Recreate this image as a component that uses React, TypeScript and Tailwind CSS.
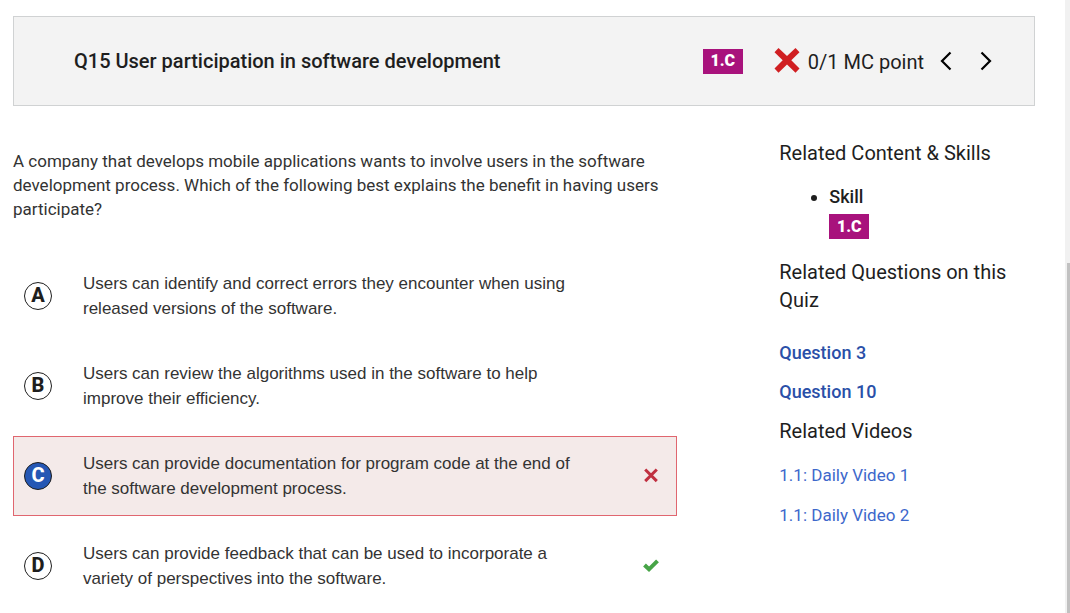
type Mark = "wrong" | "right" | undefined;

const choices: { letter: string; text: string; chosen?: boolean; mark?: Mark }[] = [
  { letter: "A", text: "Users can identify and correct errors they encounter when using released versions of the software." },
  { letter: "B", text: "Users can review the algorithms used in the software to help improve their efficiency." },
  {
    letter: "C",
    text: "Users can provide documentation for program code at the end of the software development process.",
    chosen: true,
    mark: "wrong",
  },
  {
    letter: "D",
    text: "Users can provide feedback that can be used to incorporate a variety of perspectives into the software.",
    mark: "right",
  },
];

function SkillBadge() {
  return (
    <span className="flex h-[25px] w-10 items-center justify-center bg-[#a8127c] text-base leading-6 font-black text-white">
      1.C
    </span>
  );
}

function CrossIcon({ className }: { className: string }) {
  return (
    <svg viewBox="0 0 26 26" className={className} fill="currentColor" aria-hidden="true">
      <path d="M4.5 0 13 8 21.5 0 25.5 4.2 17.3 12.2 25.5 20.5 21.5 24.7 13 16.5 4.5 24.7 .5 20.5 8.7 12.2 .5 4.2Z" />
    </svg>
  );
}

function Chevron({ points }: { points: string }) {
  return (
    <svg viewBox="0 0 12 20" className="h-5 w-3" fill="none" stroke="currentColor" strokeWidth="2.2" aria-hidden="true">
      <polyline points={points} />
    </svg>
  );
}

function ResultMark({ mark }: { mark: Mark }) {
  if (mark === "wrong") {
    return (
      <svg viewBox="0 0 16 16" className="size-4" role="img" aria-label="Incorrect">
        <path d="M2.2 1.5 13.8 13.1M13.8 1.5 2.2 13.1" fill="none" stroke="#c03040" strokeWidth="3" />
      </svg>
    );
  }
  if (mark === "right") {
    return (
      <svg viewBox="0 0 16 16" className="size-4" role="img" aria-label="Correct">
        <path d="M1.5 7 6 11.3 14.5 2.8" fill="none" stroke="#47a447" strokeWidth="4" />
      </svg>
    );
  }
  return null;
}

function SideHeading({ children }: { children: string }) {
  return <h2 className="text-xl leading-7 font-normal">{children}</h2>;
}

export default function App() {
  return (
    <div className="flex min-h-screen bg-white font-[Roboto,sans-serif] text-[#1e1e1e]">
      <main className="min-w-0 flex-1 pt-4 pr-[30px] pl-[13px]">
        <header className="flex h-[90px] items-center border border-[#d0d2d3] bg-[#f3f3f3] pr-[42px] pl-[60px]">
          <h1 className="flex-1 text-xl leading-7 font-medium">Q15 User participation in software development</h1>
          <SkillBadge />
          <div className="ml-[31px] flex items-center gap-2">
            <CrossIcon className="size-[26px] text-[#d01f22]" />
            <span className="pt-[2px] text-xl leading-7">0/1 MC point</span>
          </div>
          <nav className="ml-4 flex items-center gap-7 text-black">
            <button type="button" aria-label="Previous question" className="flex">
              <Chevron points="10.5,1.5 2,10 10.5,18.5" />
            </button>
            <button type="button" aria-label="Next question" className="flex">
              <Chevron points="1.5,1.5 10,10 1.5,18.5" />
            </button>
          </nav>
        </header>

        <div className="grid grid-cols-[65%_1fr] gap-x-[102px]">
          <section className="pt-[43px]">
            <p className="text-[17px] leading-6 text-[#333]">
              A company that develops mobile applications wants to involve users in the software development process.
              Which of the following best explains the benefit in having users participate?
            </p>
            <ol className="mt-[35px] flex flex-col gap-[10px]">
              {choices.map((choice) => (
                <li
                  key={choice.letter}
                  className={
                    "flex h-20 items-center border pr-[17px] pl-[10px] " +
                    (choice.chosen ? "border-[#e0666f] bg-[#f4eae9]" : "border-transparent")
                  }
                >
                  <span
                    className={
                      "flex size-7 shrink-0 items-center justify-center rounded-full border pb-[2px] text-xl leading-6 font-extrabold " +
                      (choice.chosen ? "border-[#1e1e1e] bg-[#2557b4] text-white" : "border-[#1e1e1e]")
                    }
                  >
                    {choice.letter}
                  </span>
                  <p className="mr-14 ml-[31px] flex-1 font-['Liberation_Sans',Arial,sans-serif] text-[17px] leading-[25px] text-[#333]">
                    {choice.text}
                  </p>
                  <span className="flex w-4 shrink-0">
                    <ResultMark mark={choice.mark} />
                  </span>
                </li>
              ))}
            </ol>
          </section>

          <aside className="pt-[33px]">
            <SideHeading>Related Content &amp; Skills</SideHeading>
            <ul className="mt-[17px] mb-[19px] list-disc pl-[50px]">
              <li className="text-lg leading-[25px] font-medium">
                Skill
                <div className="mt-[5px]">
                  <SkillBadge />
                </div>
              </li>
            </ul>
            <SideHeading>Related Questions on this Quiz</SideHeading>
            <div className="mt-[26px] flex flex-col items-start gap-[14px] text-lg leading-[25px] font-medium text-[#2a4fa8]">
              <a href="#question-3">Question 3</a>
              <a href="#question-10">Question 10</a>
            </div>
            <div className="mt-[13px]">
              <SideHeading>Related Videos</SideHeading>
            </div>
            <div className="mt-[18px] flex flex-col items-start gap-[15px] text-[17px] leading-[25px] text-[#3d68cb]">
              <a href="#video-1">1.1: Daily Video 1</a>
              <a href="#video-2">1.1: Daily Video 2</a>
            </div>
          </aside>
        </div>
      </main>

      <div className="flex w-[5px] shrink-0 flex-col bg-[#f1f1f1] pt-[263px] pl-[2px]" aria-hidden="true">
        <div className="flex-1 bg-[#c1c1c1]" />
      </div>
    </div>
  );
}
